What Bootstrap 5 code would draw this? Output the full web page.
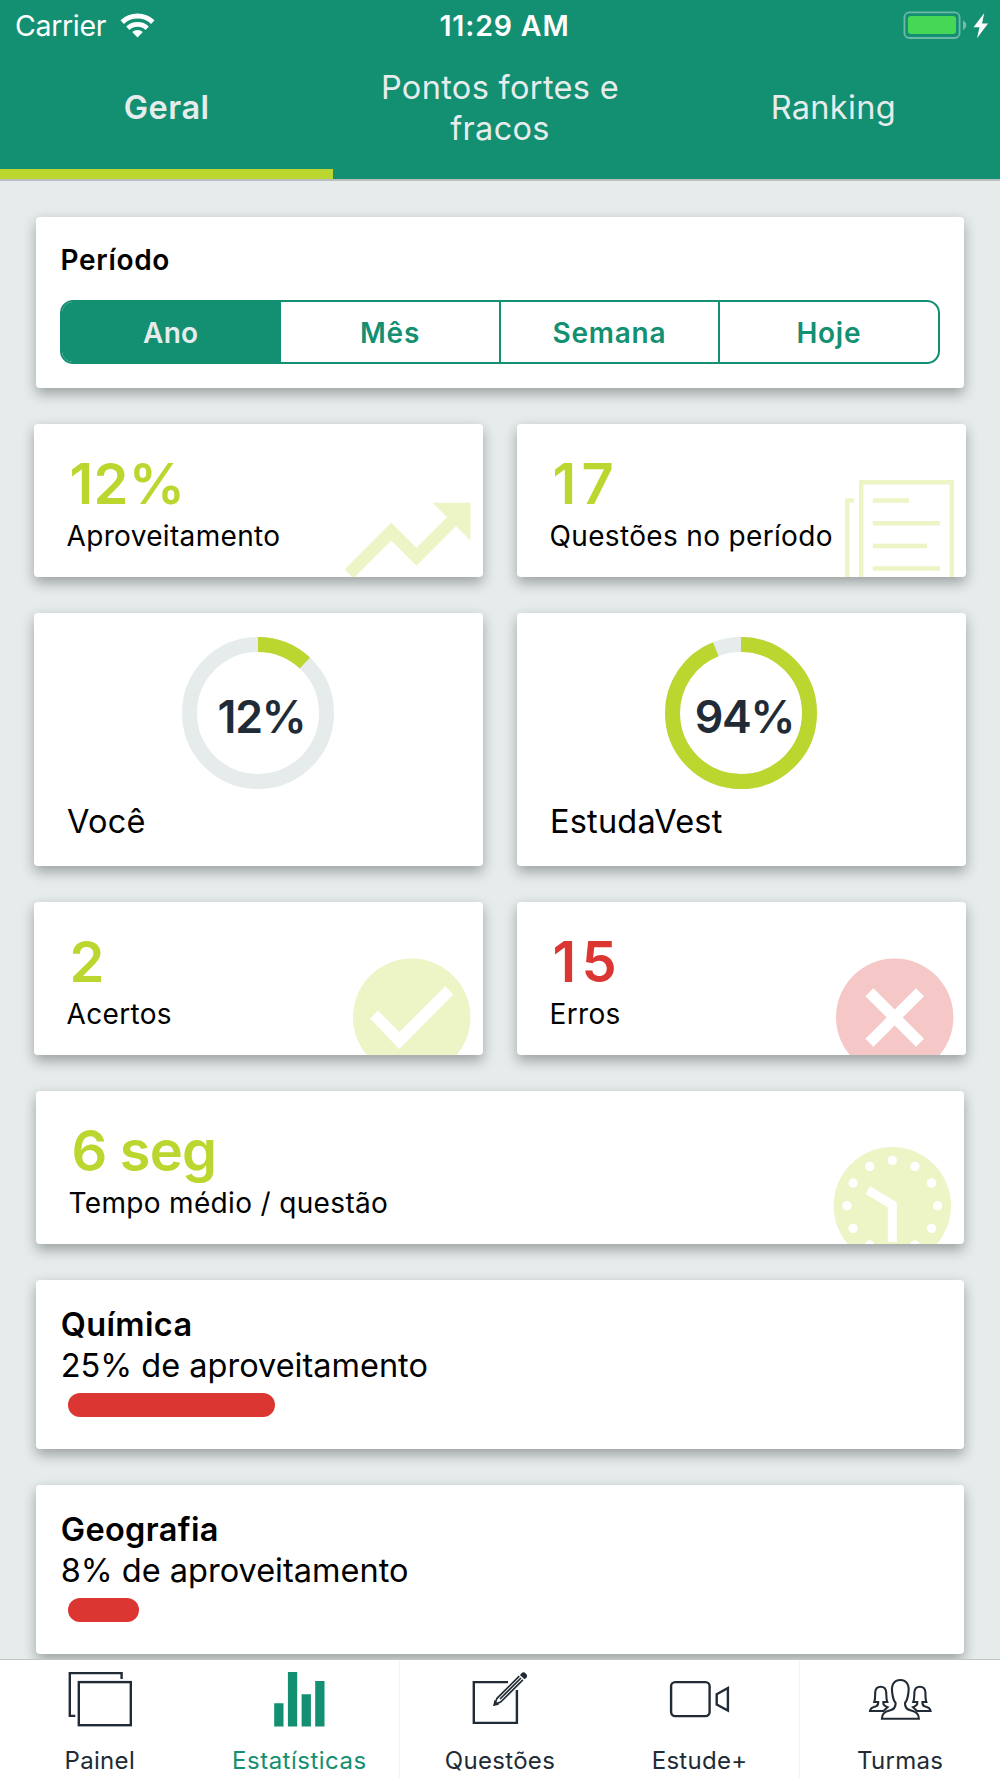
<!DOCTYPE html>
<html lang="pt-BR">
<head>
<meta charset="utf-8">
<meta name="viewport" content="width=device-width, initial-scale=1">
<title>Estatísticas</title>
<link rel="stylesheet" href="https://cdn.jsdelivr.net/npm/bootstrap@5.3.0/dist/css/bootstrap.min.css">
<script src="https://cdn.jsdelivr.net/npm/bootstrap@5.3.0/dist/js/bootstrap.bundle.min.js"></script>
<style>
  :root { --brand: #138f71; --lime: #bbd62e; --danger-red: #dc3632; --page: #e6ecec; --ink: #212b36; }
  body { font-family: Inter, "Liberation Sans", sans-serif; background: var(--page); color: #000; }
  svg { display: block; flex-shrink: 0; }
  .app-shell { height: 1778px; }
  .app-head { background: var(--brand); border-bottom: 2px solid #bcbfbf; }
  .status-bar { height: 50px; padding: 0 11px 0 15px; font-size: 28.5px; color: #fff; line-height: 50px; }
  .status-bar .carrier { letter-spacing: -.33px; padding-top: 1px; }
  .status-bar .clock { letter-spacing: .84px; padding: 1px 0 0 5px; }
  .top-tabs .nav-link { height: 129px; padding: 0 40px 4px; border-bottom: 10px solid transparent; border-radius: 0;
    color: var(--page); font-size: 32.5px; line-height: 41px; letter-spacing: .33px; }
  .top-tabs .nav-link.active { border-color: var(--lime); font-weight: 600; letter-spacing: .54px; }
  .content { padding: 36px 34px 0; gap: 36px; }
  .panel { border: 0; border-radius: 4px; box-shadow: 0 5.3px 13px rgba(0,0,0,.32); flex-shrink: 0; }
  .wide { margin: 0 2px; }
  .period { height: 171px; padding: 26px 24.5px 24px 24px; }
  .period-title { font-size: 28px; line-height: 34px; letter-spacing: .7px; margin: 0 0 23px; padding-left: .5px; font-weight: 600; }
  .seg { height: 64px; border: 2.5px solid var(--brand); border-radius: 13px; overflow: hidden; }
  .seg .btn { border: 0; border-radius: 0; padding: 2px 0 0; font-size: 28px; font-weight: 600; line-height: 1; letter-spacing: .75px;
    color: var(--brand); flex: 1 1 0; margin: 0; }
  .seg .btn + .btn { border-left: 2.5px solid var(--brand); }
  .seg .btn.active { background: var(--brand); color: var(--page); letter-spacing: .25px; }
  .pair { gap: 34px; }
  .pair > .panel { flex: 1 1 0; }
  .stat { height: 152.6px; padding: 27.6px 33px 0 32.5px; overflow: hidden; }
  .stat-clip { position: absolute; right: 0; top: 41px; }
  .stat-value { font-size: 56px; line-height: 64px; font-weight: 600; color: var(--lime); padding-left: 3px; letter-spacing: .4px; }
  .stat-value.duo { letter-spacing: 5.3px; }
  .stat-value.time { letter-spacing: -.83px; }
  .stat-value.bad { color: var(--danger-red); }
  .stat-label { font-size: 28px; line-height: 40px; letter-spacing: .34px; }
  .gauge { height: 253.8px; padding: 24.4px 34px 0 33px; }
  .ring { width: 152px; height: 152px; }
  .ring-text { position: absolute; inset: 9px 0 0 7px; font-size: 44.7px; font-weight: 600; color: var(--ink); letter-spacing: -1.2px; }
  .gauge-label { font-size: 32.5px; line-height: 40px; margin-top: 13px; letter-spacing: .2px; }
  .subject { height: 169px; padding: 24.7px 24px 0 24.7px; font-size: 32.5px; line-height: 41px; }
  .subject h2 { font-size: inherit; line-height: inherit; font-weight: 600; letter-spacing: .36px; margin: 0; }
  .subject .progress { height: 24px; margin: 7px 0 0 7px; background: none; border-radius: 0; }
  .subject .progress-bar { background: var(--danger-red); border-radius: 12px; }
  .bottom-tabs { height: 119px; border-top: 1.5px solid #c3c6c6; background: #fff; position: relative; z-index: 2; }
  .bottom-tabs .nav-link { flex: 1 1 0; padding: 3.5px 0 0; color: var(--ink); font-size: 24px; line-height: 30px; letter-spacing: .3px; border-radius: 0; }
  .bottom-tabs .nav-link svg { margin-bottom: 18px; }
  .bottom-tabs .nav-link.active { color: var(--brand); letter-spacing: .5px; }
  .bottom-tabs .parted { border-right: 1.5px solid #f2f3f3; }
  .pale { fill: #edf4c5; }
</style>
</head>
<body>
<div class="app-shell d-flex flex-column overflow-hidden">
  <header class="app-head flex-shrink-0">
    <div class="status-bar row g-0">
      <div class="col d-flex align-items-center">
        <span class="carrier">Carrier</span>
        <svg class="ms-2" width="48" height="50" viewBox="114.500 0 48 50" fill="none" stroke="#fff">
          <path d="M122.7 21.1A22.5 22.5 0 0 1 153.3 21.1" stroke-width="5"/>
          <path d="M128.3 27.3A14.2 14.2 0 0 1 147.7 27.3" stroke-width="4.8"/>
          <path d="M138 36.5l-5.3-5.4a7.6 7.6 0 0 1 10.6 0z" fill="#fff" stroke="none"/>
        </svg>
      </div>
      <div class="col-auto clock fw-semibold">11:29 AM</div>
      <div class="col d-flex justify-content-end align-items-center">
        <svg width="88" height="50" viewBox="901 0 88 50">
          <rect x="904.4" y="11.4" width="55.2" height="25.6" rx="5" fill="none" stroke="#fff" stroke-opacity=".38" stroke-width="1.8"/>
          <rect x="908" y="15" width="48" height="18" rx="3" fill="#46d756"/>
          <path d="M963 19.2q3.2 2 3.2 5t-3.2 5z" fill="#fff" fill-opacity=".42"/>
          <path d="M984.3 12l-10.8 14.2h6L977 37.200l11-14.600h-6z" fill="#fff"/>
        </svg>
      </div>
    </div>
    <nav class="nav nav-fill nav-justified top-tabs">
      <a class="nav-link active d-flex align-items-center justify-content-center" href="#">Geral</a>
      <a class="nav-link d-flex align-items-center justify-content-center" href="#">Pontos fortes e fracos</a>
      <a class="nav-link d-flex align-items-center justify-content-center" href="#">Ranking</a>
    </nav>
  </header>

  <main class="content d-flex flex-column flex-grow-1 overflow-hidden">
    <section class="card panel wide period">
      <h1 class="period-title">Período</h1>
      <div class="seg d-flex">
        <button type="button" class="btn active">Ano</button>
        <button type="button" class="btn">Mês</button>
        <button type="button" class="btn">Semana</button>
        <button type="button" class="btn">Hoje</button>
      </div>
    </section>

    <div class="pair d-flex">
      <section class="card panel stat">
        <div class="stat-value">12%</div>
        <div class="stat-label">Aproveitamento</div>
        <svg class="stat-clip pale" width="151" height="151" viewBox="0 0 24 24"><path d="M16 6l2.290 2.290-4.880 4.880-4-4L2 16.590 3.410 18l6-6 4 4 6.300-6.290L22 12V6z"/></svg>
      </section>
      <section class="card panel stat">
        <div class="stat-value duo">17</div>
        <div class="stat-label">Questões no período</div>
        <svg class="stat-clip" width="151" height="151" viewBox="0 0 151 151" fill="none" stroke="#edf4c5" stroke-width="4.5">
          <path d="M46.200 151V17.200H136.800V151M39 35.400H32.300V151M57.700 35.400H94M57.700 58.300H125M57.700 81H112M57.700 103.600H125"/>
        </svg>
      </section>
    </div>

    <div class="pair d-flex">
      <section class="card panel gauge">
        <div class="ring position-relative mx-auto">
          <svg width="152" height="152" viewBox="0 0 152 152" fill="none" stroke-width="15">
            <circle cx="76" cy="76" r="68.500" stroke="#e6ecec"/>
            <circle cx="76" cy="76" r="68.500" stroke="#bbd62e" pathLength="100" stroke-dasharray="12 88" transform="rotate(-90 76 76)"/>
          </svg>
          <div class="ring-text d-flex align-items-center justify-content-center">12%</div>
        </div>
        <div class="gauge-label">Você</div>
      </section>
      <section class="card panel gauge">
        <div class="ring position-relative mx-auto">
          <svg width="152" height="152" viewBox="0 0 152 152" fill="none" stroke-width="15">
            <circle cx="76" cy="76" r="68.500" stroke="#e6ecec"/>
            <circle cx="76" cy="76" r="68.500" stroke="#bbd62e" pathLength="100" stroke-dasharray="94 6" transform="rotate(-90 76 76)"/>
          </svg>
          <div class="ring-text d-flex align-items-center justify-content-center">94%</div>
        </div>
        <div class="gauge-label">EstudaVest</div>
      </section>
    </div>

    <div class="pair d-flex">
      <section class="card panel stat">
        <div class="stat-value">2</div>
        <div class="stat-label">Acertos</div>
        <svg class="stat-clip" width="151" height="151" viewBox="0 0 151 151">
          <circle class="pale" cx="79.700" cy="74.300" r="58.700"/>
          <path d="M38 75.600l8-8 21.300 21.400 46-45.700 8 8.300-54 54.400z" fill="#fff"/>
        </svg>
      </section>
      <section class="card panel stat">
        <div class="stat-value duo bad">15</div>
        <div class="stat-label">Erros</div>
        <svg class="stat-clip" width="151" height="151" viewBox="0 0 151 151">
          <circle cx="79.700" cy="74.300" r="58.700" fill="#f5c7c6"/>
          <path d="M54.400 49.200l50.600 50.600M105 49.200l-50.600 50.600" stroke="#fff" stroke-width="11.300"/>
        </svg>
      </section>
    </div>

    <section class="card panel wide stat">
      <div class="stat-value time">6 seg</div>
      <div class="stat-label">Tempo médio / questão</div>
      <svg class="stat-clip" width="151" height="151" viewBox="0 0 151 151">
        <circle class="pale" cx="79.300" cy="73.700" r="58.700"/>
        <g fill="#fff" transform="translate(79.300 73.700)">
          <circle r="4.700" cx="0" cy="-45.300"/><circle r="4.700" cx="22.650" cy="-39.200"/><circle r="4.700" cx="39.200" cy="-22.650"/>
          <circle r="4.700" cx="45.300" cy="0"/><circle r="4.700" cx="39.200" cy="22.650"/><circle r="4.700" cx="22.650" cy="39.200"/>
          <circle r="4.700" cx="0" cy="45.300"/><circle r="4.700" cx="-22.650" cy="39.200"/><circle r="4.700" cx="-39.200" cy="22.650"/>
          <circle r="4.700" cx="-45.300" cy="0"/><circle r="4.700" cx="-39.200" cy="-22.650"/><circle r="4.700" cx="-22.650" cy="-39.200"/>
          <path d="M-24.500 -15.500L0 -1V36.300" fill="none" stroke="#fff" stroke-width="9"/>
        </g>
      </svg>
    </section>

    <section class="card panel wide subject">
      <h2>Química</h2>
      <div>25% de aproveitamento</div>
      <div class="progress"><div class="progress-bar" style="width:207.5px"></div></div>
    </section>
    <section class="card panel wide subject">
      <h2>Geografia</h2>
      <div>8% de aproveitamento</div>
      <div class="progress"><div class="progress-bar" style="width:71.5px"></div></div>
    </section>
  </main>

  <nav class="bottom-tabs nav flex-nowrap flex-shrink-0">
    <a class="nav-link d-flex flex-column align-items-center" href="#">
      <svg width="80" height="64" viewBox="0 0 80 64" fill="none" stroke="currentColor" stroke-width="2.400">
        <rect x="18.800" y="18.100" width="52" height="43.100"/><path d="M61.600 15V9.100H9.800V51.900H15.300"/>
      </svg>
      Painel
    </a>
    <a class="nav-link active parted d-flex flex-column align-items-center" href="#">
      <svg width="80" height="64" viewBox="0 0 80 64" fill="currentColor">
        <path d="M15.200 39.300h9.300v23.100h-9.300zM28.900 8h9.300v54.400h-9.300zM42.600 30.300h9.300v32.100h-9.300zM56.200 17h9.300v45.400h-9.300z"/>
      </svg>
      Estatísticas
    </a>
    <a class="nav-link d-flex flex-column align-items-center" href="#">
      <svg width="80" height="64" viewBox="0 0 80 64" fill="none" stroke="currentColor" stroke-width="2.400">
        <path d="M48 18.100H13.800V58.900H56.900V26"/>
        <path d="M59.300 12.200L37 34.300L34.600 40.400L40.600 38.100L62.900 15.900M61 14L40 35" stroke-width="1.700"/>
        <path d="M33.300 42l1-6 4.800 4.800z" fill="currentColor" stroke="none"/>
        <path d="M61.300 9.600q2-2.600 4.500-.2t.3 4.600l-1.500 1.300-4.700-4.300z" fill="currentColor" stroke="none"/>
      </svg>
      Questões
    </a>
    <a class="nav-link parted d-flex flex-column align-items-center" href="#">
      <svg width="80" height="64" viewBox="0 0 80 64" fill="none" stroke="currentColor" stroke-width="2.400">
        <rect x="11.100" y="18.100" width="38.500" height="34" rx="4"/><path d="M56.700 30.300L67.900 24V46.500L56.700 40.500z"/>
      </svg>
      Estude+
    </a>
    <a class="nav-link d-flex flex-column align-items-center" href="#">
      <svg width="80" height="64" viewBox="0 0 80 64" fill="none" stroke="currentColor" stroke-width="2.100">
        <path d="M21.900 54.700H58.900C58.900 49.500 56 47.800 51 46.600C46 45.300 44.800 42.500 45 39C47.200 36.500 47.800 33 48.300 29.500C49.800 21 46.500 16 40.300 16S30.800 21 32.300 29.500C32.800 33 33.400 36.500 35.600 39C35.800 42.500 34.600 45.300 29.600 46.600C24.600 47.800 21.900 49.500 21.900 54.700Z"/>
        <path id="side" d="M23.500 47H10C10.500 44 13 43 16 42.300C18 41.700 18.300 40.500 18.200 38H14.300C15.500 35 15 31 15.200 28C15.600 24.500 17.500 22.700 20.700 22.700S25.800 24.500 26.200 28C26.400 31 26 35 27.300 38H23.300C23.200 40.500 23.500 41.700 27.600 43.200Z"/>
        <use href="#side" transform="matrix(-1 0 0 1 80.600 0)"/>
      </svg>
      Turmas
    </a>
  </nav>
</div>
</body>
</html>
